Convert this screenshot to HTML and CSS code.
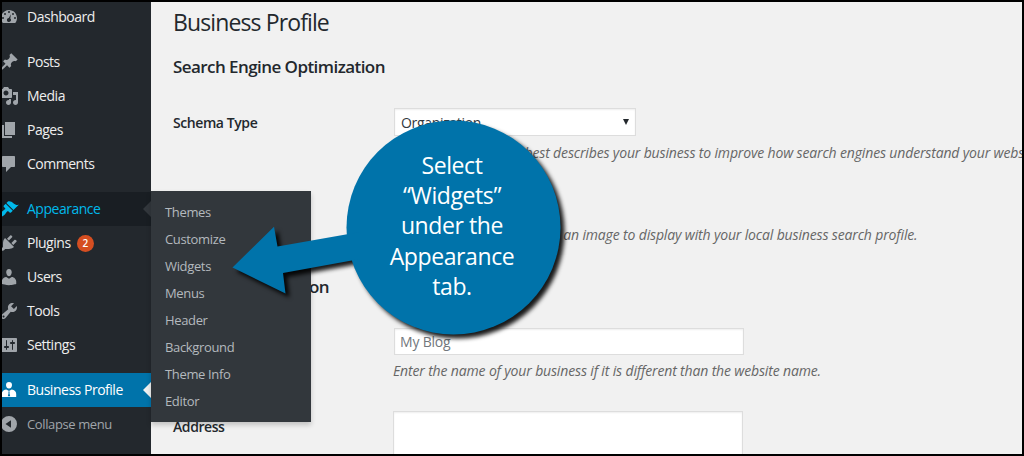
FILE: index.html
```html
<!DOCTYPE html>
<html lang="en">
<head>
  <meta charset="UTF-8">
  <title>Business Profile</title>
  <link rel="stylesheet" href="styles.css">
</head>
<body>
  <div class="admin">
    <ul class="menu">
      <li class="item">
        <svg class="icon" viewBox="0 0 20 20"><path fill-rule="evenodd" d="M3.76 16h12.48c1.1-1.37 1.76-3.11 1.76-5 0-4.42-3.58-8-8-8s-8 3.58-8 8c0 1.89.66 3.63 1.76 5zM10 4a1 1 0 110 2 1 1 0 010-2zM6 6a1 1 0 110 2 1 1 0 010-2zM14 6a1 1 0 110 2 1 1 0 010-2zM4 10a1 1 0 110 2 1 1 0 010-2zM16 10a1 1 0 110 2 1 1 0 010-2zM11.9 7.2l-.6 4.3c.8.6 1 1.7.4 2.6-.7 1-2 1.200-2.900.6-1-.7-1.100-2-.5-2.900.4-.5.9-.8 1.500-.8z"/></svg>
        <span>Dashboard</span>
      </li>
      <li class="item gap">
        <svg class="icon" viewBox="0 0 20 20"><path d="M10.440 3.020l1.820-1.820 6.360 6.350-1.830 1.820c-1.050-.68-2.480-.57-3.410.36l-.75.75c-.92.93-1.040 2.350-.35 3.410l-1.830 1.820-2.410-2.410-2.800 2.790c-.42.42-3.380 2.710-3.800 2.290s1.860-3.390 2.280-3.810l2.790-2.790L4.100 9.360l1.830-1.820c1.050.69 2.480.57 3.400-.36l.75-.75c.93-.92 1.050-2.350.36-3.410z"/></svg>
        <span>Posts</span>
      </li>
      <li class="item">
        <svg class="icon" viewBox="0 0 20 20"><path d="M13 11V4c0-.55-.45-1-1-1h-1.670L9 1H5L3.670 3H2c-.55 0-1 .45-1 1v7c0 .55.45 1 1 1h10c.55 0 1-.45 1-1zM7 4.500c1.380 0 2.500 1.120 2.500 2.500S8.380 9.500 7 9.500 4.500 8.380 4.500 7 5.620 4.500 7 4.500zM14 6h5v10.500c0 1.380-1.120 2.500-2.500 2.500S14 17.880 14 16.500s1.120-2.500 2.500-2.500c.17 0 .34.02.5.05V9h-3V6zm-4 8.050V13h2v3.500c0 1.380-1.120 2.500-2.500 2.500S7 17.880 7 16.500 8.120 14 9.500 14c.17 0 .34.02.5.05z"/></svg>
        <span>Media</span>
      </li>
      <li class="item">
        <svg class="icon" viewBox="0 0 20 20"><path d="M6 15V2h10v13H6zm-1 1h8v2H3V5h2v11z"/></svg>
        <span>Pages</span>
      </li>
      <li class="item">
        <svg class="icon" viewBox="0 0 20 20"><path d="M4 2h11c.6 0 1 .4 1 1v9c0 .6-.4 1-1 1h-3l-5 5v-5H4c-.6 0-1-.4-1-1V3c0-.6.4-1 1-1z"/></svg>
        <span>Comments</span>
      </li>
      <li class="item gap open">
        <svg class="icon" viewBox="0 0 20 20"><path d="M14.480 11.060L7.410 3.990l1.500-1.500c.5-.56 2.300-.47 3.510.32 1.210.8 1.430 1.280 2.910 2.100 1.180.64 2.450 1.260 4.450.85zm-.71.71L6.700 4.700 4.930 6.470c-.39.39-.39 1.020 0 1.410l1.060 1.060c.39.39.39 1.030 0 1.420-.6.6-1.430 1.110-2.210 1.690-.35.26-.7.53-1.010.84C1.430 14.230.4 16.080 1.400 17.070c.99 1 2.840-.03 4.180-1.360.31-.31.58-.66.85-1.020.57-.78 1.080-1.610 1.690-2.210.39-.39 1.020-.39 1.410 0l1.060 1.060c.39.39 1.020.39 1.410 0z"/></svg>
        <span>Appearance</span>
        <ul class="submenu">
          <li>Themes</li>
          <li>Customize</li>
          <li>Widgets</li>
          <li>Menus</li>
          <li>Header</li>
          <li>Background</li>
          <li>Theme Info</li>
          <li>Editor</li>
        </ul>
      </li>
      <li class="item">
        <svg class="icon" viewBox="0 0 20 20"><path d="M13.110 4.360L9.870 7.600 8 5.730l3.240-3.240c.35-.34 1.050-.2 1.560.32.52.51.66 1.210.31 1.550zm-8 1.770l.91-1.120 9.010 9.010-1.190.84c-.71.71-2.630 1.160-3.820 1.160H6.140L4.900 17.260c-.59.59-1.540.59-2.120 0-.59-.58-.59-1.530 0-2.120l1.240-1.240v-3.880c0-1.130.4-3.190 1.090-3.890zm7.260 3.970l3.240-3.240c.34-.35 1.040-.21 1.550.31.52.51.66 1.210.31 1.550l-3.240 3.250z"/></svg>
        <span>Plugins</span>
        <b class="badge">2</b>
      </li>
      <li class="item">
        <svg class="icon" viewBox="0 0 20 20"><path d="M10 9.250c-2.270 0-2.730-3.440-2.730-3.440C7 4.020 7.820 2 9.970 2c2.160 0 2.980 2.020 2.710 3.810 0 0-.41 3.440-2.680 3.440zm0 2.570L12.720 10c2.390 0 4.520 2.330 4.520 4.530v2.490s-3.650 1.130-7.240 1.130c-3.650 0-7.240-1.130-7.240-1.130v-2.490c0-2.250 1.940-4.480 4.470-4.480z"/></svg>
        <span>Users</span>
      </li>
      <li class="item">
        <svg class="icon" viewBox="0 0 20 20"><path d="M16.680 9.770c-1.340 1.340-3.300 1.670-4.950.99l-5.410 6.520c-.99.99-2.590.99-3.580 0s-.99-2.590 0-3.570l6.520-5.420c-.68-1.650-.35-3.610.99-4.950 1.280-1.280 3.120-1.620 4.720-1.060l-2.890 2.890 2.820 2.820 2.860-2.870c.53 1.580.18 3.390-1.080 4.650zM3.810 16.210c.4.39 1.040.39 1.430 0 .4-.4.4-1.040 0-1.430-.39-.4-1.030-.4-1.430 0-.39.39-.39 1.030 0 1.430z"/></svg>
        <span>Tools</span>
      </li>
      <li class="item">
        <svg class="icon" viewBox="0 0 20 20"><path d="M18 16V4c0-.55-.45-1-1-1H3c-.55 0-1 .45-1 1v12c0 .55.45 1 1 1h14c.55 0 1-.45 1-1zM8 11h1c.55 0 1 .45 1 1s-.45 1-1 1H8v1.500c0 .28-.22.5-.5.5s-.5-.22-.5-.5V13H6c-.55 0-1-.45-1-1s.45-1 1-1h1V5.500c0-.28.22-.5.5-.5s.5.22.5.5V11zm5-2h-1c-.55 0-1-.45-1-1s.45-1 1-1h1V5.500c0-.28.22-.5.5-.5s.5.22.5.5V7h1c.55 0 1 .45 1 1s-.45 1-1 1h-1v5.500c0 .28-.22.5-.5.5s-.5-.22-.5-.5V9z"/></svg>
        <span>Settings</span>
      </li>
      <li class="item gap current">
        <svg class="icon" viewBox="0 0 20 20"><path fill-rule="evenodd" d="M10 8.500c-2 0-3-1.700-3-3.500S8 2 10 2s3 1.200 3 3-1 3.500-3 3.500zM7.300 9.500L10 11l2.700-1.500c2.800.2 4.500 2 4.500 4.500v3H2.800v-3c0-2.500 1.700-4.300 4.500-4.500zM9.200 11.600l.4 1.400-.8 3.300h2.400l-.8-3.300.4-1.400z"/></svg>
        <span>Business Profile</span>
      </li>
      <li class="item collapse">
        <svg class="icon" viewBox="0 0 20 20"><path fill-rule="evenodd" d="M10 2a8 8 0 110 16 8 8 0 010-16zM12 6.200L6.500 10l5.500 3.800z"/></svg>
        <span>Collapse menu</span>
      </li>
    </ul>

    <div class="content">
      <h1>Business Profile</h1>
      <h2>Search Engine Optimization</h2>
      <div class="row schema">
        <label>Schema Type</label>
        <div class="field">
          <div class="select"><span>Organization</span><i></i></div>
          <p>Select the option that best describes your business to improve how search engines understand your website.</p>
        </div>
      </div>
      <div class="row image">
        <label></label>
        <div class="field">
          <p>Upload your logo or choose an image to display with your local business search profile.</p>
        </div>
      </div>
      <h2 class="contact">Contact Information</h2>
      <div class="row name">
        <label></label>
        <div class="field">
          <div class="input">My Blog</div>
          <p>Enter the name of your business if it is different than the website name.</p>
        </div>
      </div>
      <div class="row address">
        <label>Address</label>
        <div class="field">
          <div class="textarea"></div>
        </div>
      </div>
    </div>

    <!-- callout with arrow pointing at Widgets -->
    <div class="callout">
      <svg class="bubble" viewBox="0 0 350 236">
        <circle cx="223.500" cy="117.500" r="107"/>
        <path d="M2.500 157.500L44 116.700l3.500 19.800L130 122v27l-77 14 2.500 20.500z"/>
      </svg>
      <div class="tip">Select<br>“Widgets”<br>under the<br>Appearance<br>tab.</div>
    </div>
  </div>
</body>
</html>
```
FILE: styles.css
```css
* {
  box-sizing: border-box;
}
body {
  margin: 0;
  font-family: "Open Sans", "Noto Sans", sans-serif;
  font-size: 14px;
  color: #23282d;
}
ul {
  list-style: none;
  margin: 0;
  padding: 0;
}
.admin {
  position: relative;
  display: flex;
  width: 1024px;
  height: 456px;
  border: 2px solid #000;
  background: #f1f1f1;
  overflow: hidden;
}

/* sidebar */
.menu {
  flex: none;
  width: 149px;
  height: 452px;
  background: #23282d;
  color: #eee;
  letter-spacing: -0.48px;
}
.item {
  position: relative;
  display: flex;
  align-items: center;
  height: 34px;
}
.item span {
  padding-bottom: 2px;
}
.item:first-child {
  margin-top: -2px;
}
.gap {
  margin-top: 11px;
}
.icon {
  flex: none;
  width: 20px;
  height: 20px;
  margin: 0 8px 0 -3px;
  fill: #a0a5aa;
}
.open {
  background: #191e23;
  color: #00b9eb;
}
.open .icon {
  fill: #00b9eb;
}
.current {
  background: #0073aa;
  color: #fff;
}
.current .icon {
  fill: #fff;
}
.open::after,
.current::after {
  content: "";
  position: absolute;
  right: 0;
  top: 9px;
  border: 8px solid transparent;
  border-left: 0;
  border-right-color: #32373c;
}
.current::after {
  border-right-color: #f1f1f1;
}
.badge {
  width: 17px;
  height: 17px;
  margin-left: 6px;
  border-radius: 50%;
  background: #d54e21;
  color: #fff;
  font-size: 10px;
  font-weight: 600;
  line-height: 17px;
  text-align: center;
}
.collapse {
  color: #a0a5aa;
  font-size: 13px;
  letter-spacing: -0.38px;
}
.collapse span {
  padding-bottom: 0;
}
.submenu {
  position: absolute;
  left: 149px;
  top: -1px;
  z-index: 2;
  width: 160px;
  height: 231px;
  padding: 8px 14px;
  background: #32373c;
  box-shadow: 0 3px 5px rgba(0, 0, 0, 0.2);
  color: #b4b9be;
  font-size: 13px;
  line-height: 27px;
  letter-spacing: -0.35px;
}

/* settings form */
.content {
  flex: none;
  width: 1000px;
  padding-left: 22px;
}
h1 {
  margin: 4px 0 0;
  font-size: 23px;
  font-weight: 400;
  line-height: 32px;
  letter-spacing: -0.88px;
}
h2 {
  margin: 17px 0 0;
  font-size: 17px;
  font-weight: 600;
  line-height: 24px;
  letter-spacing: -0.56px;
}
.row {
  display: grid;
  grid-template-columns: 221px 1fr;
}
label {
  font-weight: 600;
  line-height: 20px;
  letter-spacing: -0.42px;
}
p {
  margin: 0 0 0 -1px;
  color: #666;
  font-style: italic;
  line-height: 20px;
  letter-spacing: -0.15px;
  white-space: nowrap;
}
.schema {
  margin-top: 29px;
}
.schema label {
  padding-top: 5px;
}
.select {
  display: flex;
  align-items: center;
  justify-content: space-between;
  width: 242px;
  height: 28px;
  padding: 0 6px 0 6px;
  border: 1px solid #ddd;
  background: #fff;
  box-shadow: inset 0 1px 2px rgba(0, 0, 0, 0.07);
  color: #32373c;
  letter-spacing: -0.33px;
}
.select i {
  border: 3.500px solid transparent;
  border-top: 6px solid #23282d;
  border-bottom: 0;
}
.schema p {
  margin-top: 7px;
}
.image {
  margin-top: 62px;
}
.contact {
  margin-top: 30px;
}
.name {
  margin-top: 29px;
}
.input {
  width: 350px;
  height: 27px;
  padding-left: 5px;
  border: 1px solid #ddd;
  background: #fff;
  box-shadow: inset 0 1px 2px rgba(0, 0, 0, 0.07);
  color: #72777c;
  line-height: 26px;
  letter-spacing: -0.2px;
}
.name p {
  margin-top: 6px;
}
.address {
  margin-top: 30px;
  grid-template-columns: 220px 1fr;
}
.address label {
  padding-top: 6px;
}
.textarea {
  width: 350px;
  height: 60px;
  border: 1px solid #ddd;
  background: #fff;
  box-shadow: inset 0 1px 2px rgba(0, 0, 0, 0.07);
}

/* callout */
.callout {
  position: absolute;
  left: 228px;
  top: 108px;
  z-index: 3;
  width: 350px;
  height: 236px;
}
.bubble {
  display: block;
  width: 350px;
  height: 236px;
  fill: #0073aa;
  filter: drop-shadow(4px 4px 2px rgba(0, 0, 0, 0.9));
}
.tip {
  position: absolute;
  left: 116px;
  top: 40px;
  width: 212px;
  color: #fff;
  font-size: 23px;
  line-height: 30.200px;
  letter-spacing: -0.4px;
  text-align: center;
}
```
